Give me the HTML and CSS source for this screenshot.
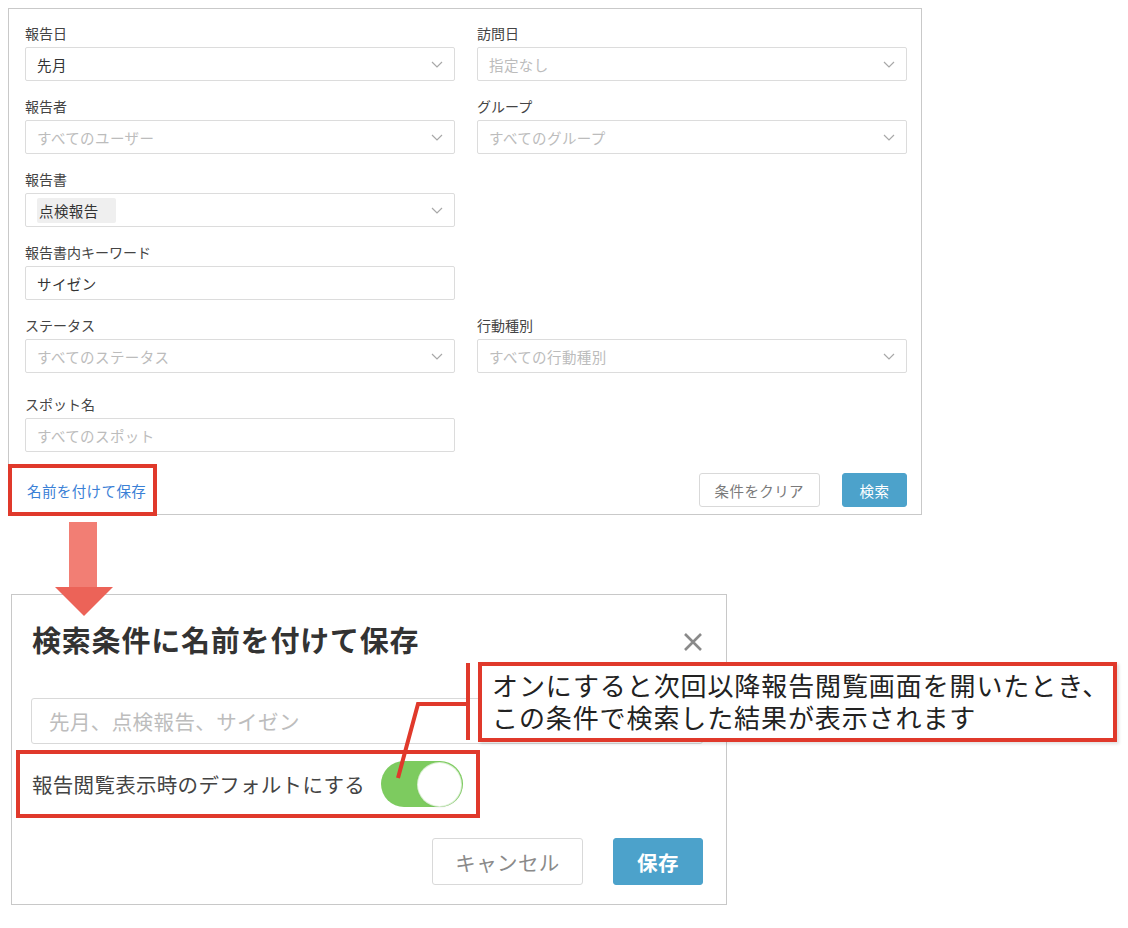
FILE: index.html
```html
<!DOCTYPE html>
<html lang="ja">

<head>
    <meta charset="UTF-8">
    <title>検索条件に名前を付けて保存</title>
    <link rel="stylesheet" href="styles.css">
</head>

<body>
    <div class="page">
        <section class="search">
            <div class="grid">
                <div class="field">
                    <label>報告日</label>
                    <div class="control select"><span class="value">先月</span><svg class="chev" viewBox="0 0 12 7"><polyline points="1,1 6,6 11,1" /></svg></div>
                </div>
                <div class="field">
                    <label>訪問日</label>
                    <div class="control select"><span class="ph">指定なし</span><svg class="chev" viewBox="0 0 12 7"><polyline points="1,1 6,6 11,1" /></svg></div>
                </div>

                <div class="field">
                    <label>報告者</label>
                    <div class="control select"><span class="ph">すべてのユーザー</span><svg class="chev" viewBox="0 0 12 7"><polyline points="1,1 6,6 11,1" /></svg></div>
                </div>
                <div class="field">
                    <label>グループ</label>
                    <div class="control select"><span class="ph">すべてのグループ</span><svg class="chev" viewBox="0 0 12 7"><polyline points="1,1 6,6 11,1" /></svg></div>
                </div>

                <div class="field">
                    <label>報告書</label>
                    <div class="control select"><span class="tag">点検報告</span><svg class="chev" viewBox="0 0 12 7"><polyline points="1,1 6,6 11,1" /></svg></div>
                </div>
                <div class="field"></div>

                <div class="field">
                    <label>報告書内キーワード</label>
                    <div class="control"><span class="value">サイゼン</span></div>
                </div>
                <div class="field"></div>

                <div class="field">
                    <label>ステータス</label>
                    <div class="control select"><span class="ph">すべてのステータス</span><svg class="chev" viewBox="0 0 12 7"><polyline points="1,1 6,6 11,1" /></svg></div>
                </div>
                <div class="field">
                    <label>行動種別</label>
                    <div class="control select"><span class="ph">すべての行動種別</span><svg class="chev" viewBox="0 0 12 7"><polyline points="1,1 6,6 11,1" /></svg></div>
                </div>

                <div class="field spaced">
                    <label>スポット名</label>
                    <div class="control"><span class="ph">すべてのスポット</span></div>
                </div>
                <div class="field spaced"></div>
            </div>

            <div class="search-foot">
                <a class="save-link">名前を付けて保存</a>
                <div class="actions">
                    <button class="btn">条件をクリア</button>
                    <button class="btn primary">検索</button>
                </div>
            </div>
        </section>

        <section class="dialog">
            <div class="dialog-head">
                <h2>検索条件に名前を付けて保存</h2>
                <svg class="close" viewBox="0 0 20 20"><path d="M2 2 L18 18 M18 2 L2 18" /></svg>
            </div>
            <div class="name-input">先月、点検報告、サイゼン</div>
            <div class="default-row">
                <span>報告閲覧表示時のデフォルトにする</span>
                <div class="toggle"><div class="knob"></div></div>
            </div>
            <div class="dialog-foot">
                <button class="btn big">キャンセル</button>
                <button class="btn big primary">保存</button>
            </div>
        </section>

        <!-- annotations -->
        <div class="mark mark-link"></div>
        <div class="mark mark-toggle"></div>
        <svg class="arrow" viewBox="0 0 58 94">
            <rect x="14" y="0" width="28" height="66" fill="#f27e74" />
            <polygon points="0,65 58,65 29,94" fill="#ec6358" />
        </svg>
        <svg class="leader" viewBox="0 0 1128 928">
            <path d="M468 663 L468 740 M468 704 L418 704 L398 778" />
        </svg>
        <div class="callout">
            オンにすると次回以降報告閲覧画面を開いたとき、<br>この条件で検索した結果が表示されます
        </div>
    </div>
</body>

</html>
```

FILE: styles.css
```css
body {
    margin: 0;
    font-family: "Noto Sans CJK JP", "Noto Sans", sans-serif;
    color: #333;
    background: #fff;
}

.page {
    position: relative;
    width: 1128px;
    height: 928px;
    overflow: hidden;
}

/* search panel */
.search {
    margin: 8px 0 0 8px;
    width: 914px;
    box-sizing: border-box;
    border: 1px solid #c9c9c9;
    padding: 14px 14px 7px 16px;
}

.grid {
    display: grid;
    grid-template-columns: 430px 430px;
    column-gap: 22px;
    row-gap: 15px;
}

.field.spaced {
    margin-top: 6px;
}

.field label {
    display: block;
    font-size: 14px;
    line-height: 20px;
    color: #444;
}

.control {
    margin-top: 4px;
    height: 34px;
    box-sizing: border-box;
    border: 1px solid #dcdcdc;
    border-radius: 2px;
    padding: 0 11px;
    display: flex;
    align-items: center;
    font-size: 14.5px;
    letter-spacing: 0.4px;
}

.select {
    justify-content: space-between;
}

.value {
    color: #333;
}

.ph {
    color: #bcbcbc;
}

.tag {
    background: #efefef;
    color: #333;
    line-height: 25px;
    padding: 0 17px 0 2px;
    border-radius: 2px;
}

.chev {
    width: 12px;
    height: 7px;
    fill: none;
    stroke: #a8a8a8;
    stroke-width: 1.2;
}

.search-foot {
    margin-top: 21px;
    display: flex;
    justify-content: space-between;
    align-items: center;
}

.save-link {
    margin-left: 2px;
    font-size: 14.5px;
    letter-spacing: 0.4px;
    color: #3a80d6;
}

.actions {
    display: flex;
    gap: 22px;
}

.btn {
    height: 34px;
    box-sizing: border-box;
    border: 1px solid #d9d9d9;
    border-radius: 3px;
    background: #fff;
    color: #7a7a7a;
    font-family: inherit;
    font-size: 14.5px;
    letter-spacing: 0.4px;
    padding: 0 15px;
}

.btn.primary {
    width: 65px;
    background: #4ca2cb;
    border-color: #4ca2cb;
    color: #fff;
    padding: 0;
}

/* dialog */
.dialog {
    margin: 79px 0 0 11px;
    width: 716px;
    height: 311px;
    box-sizing: border-box;
    border: 1px solid #c8c8c8;
    padding: 24px 23px 19px 19px;
}

.dialog-head {
    display: flex;
    justify-content: space-between;
    align-items: center;
}

.dialog-head h2 {
    margin: 0 0 0 1px;
    font-size: 29px;
    line-height: 40px;
    letter-spacing: 0.8px;
    font-weight: bold;
    color: #333;
}

.close {
    width: 20px;
    height: 20px;
    margin-top: 6px;
    fill: none;
    stroke: #8a8a8a;
    stroke-width: 2.6;
}

.name-input {
    margin-top: 39px;
    height: 46px;
    box-sizing: border-box;
    border: 1px solid #d9d9d9;
    border-radius: 3px;
    padding: 0 17px;
    display: flex;
    align-items: center;
    font-size: 20.5px;
    letter-spacing: 0.4px;
    color: #bdbdbd;
}

.default-row {
    margin-top: 17px;
    display: flex;
    align-items: center;
    gap: 16px;
    font-size: 20.5px;
    letter-spacing: 0.3px;
    color: #444;
    padding-left: 1px;
}

.toggle {
    width: 82px;
    height: 46px;
    border-radius: 23px;
    background: #7dcb5f;
    display: flex;
    align-items: center;
    justify-content: flex-end;
    padding-right: 2px;
    box-sizing: border-box;
}

.knob {
    width: 43px;
    height: 43px;
    border-radius: 50%;
    background: #fff;
    box-shadow: 0 0 0 1px #d8efd0, 0 1px 2px rgba(0, 0, 0, 0.15);
}

.dialog-foot {
    margin-top: 31px;
    display: flex;
    justify-content: flex-end;
    gap: 30px;
}

.btn.big {
    width: 151px;
    height: 47px;
    font-size: 20.5px;
    padding: 0;
    color: #8a8a8a;
}

.btn.big.primary {
    width: 90px;
    color: #fff;
    font-weight: bold;
}

/* annotations over the screenshots */
.mark {
    position: absolute;
    box-sizing: border-box;
    border: 4px solid #e0392b;
}

.mark-link {
    left: 8px;
    top: 464px;
    width: 149px;
    height: 52px;
}

.mark-toggle {
    left: 16px;
    top: 750px;
    width: 464px;
    height: 68px;
}

.arrow {
    position: absolute;
    left: 55px;
    top: 522px;
    width: 58px;
    height: 94px;
}

.leader {
    position: absolute;
    left: 0;
    top: 0;
    width: 1128px;
    height: 928px;
    fill: none;
    stroke: #e0392b;
    stroke-width: 4;
}

.callout {
    position: absolute;
    left: 478px;
    top: 662px;
    width: 639px;
    height: 80px;
    box-sizing: border-box;
    border: 4px solid #e0392b;
    background: #fff;
    box-shadow: 2px 2px 3px rgba(0, 0, 0, 0.12);
    padding: 3px 0 0 10px;
    font-size: 26px;
    line-height: 32px;
    letter-spacing: 0.9px;
    color: #222;
    white-space: nowrap;
}
```
